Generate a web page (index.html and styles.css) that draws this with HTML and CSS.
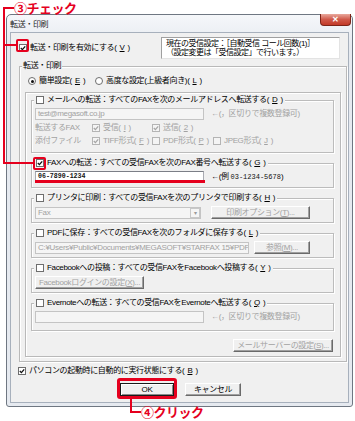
FILE: index.html
```html
<!DOCTYPE html>
<html lang="ja">
<head>
    <meta charset="utf-8" />
    <title>転送・印刷</title>
    <link rel="stylesheet" href="styles.css">
</head>
<body>
<div class="page">
    <div class="window">
        <div class="titlebar">
            <span class="title">転送・印刷</span>
            <span class="close">✕</span>
        </div>
        <div class="client">
            <div class="top-row">
                <label class="chk"><span class="cb on"><svg viewBox="0 0 6 6"><path d="M0.8 3 2.4 4.6 5.2 1.3"/></svg></span>転送・印刷を有効にする(<u>V</u>)</label>
                <div class="status">現在の受信設定：［自動受信 コール回数(1)］<br>（設定変更は「受信設定」で行います。）</div>
            </div>

            <div class="outer-group">
                <div class="outer-title">転送・印刷</div>
                <div class="radios">
                    <label class="rad"><span class="rb on"></span>簡単設定(<u>E</u>)</label>
                    <label class="rad"><span class="rb"></span>高度な設定(上級者向き)(<u>L</u>)</label>
                </div>

                <div class="panel">
                    <div class="group mail">
                        <div class="group-title"><span class="cb"></span>メールへの転送：すべてのFAXを次のメールアドレスへ転送する(<u>D</u>)</div>
                        <div class="group-body">
                            <div class="line">
                                <span class="input off w-short">test@megasoft.co.jp</span>
                                <span class="hint off">←(，区切りで複数登録可)</span>
                            </div>
                            <div class="opts off">
                                <span>転送するFAX</span>
                                <span class="chk"><span class="cb dis on"><svg viewBox="0 0 6 6"><path d="M0.8 3 2.4 4.6 5.2 1.3"/></svg></span>受信(<u>I</u>)</span>
                                <span class="chk"><span class="cb dis on"><svg viewBox="0 0 6 6"><path d="M0.8 3 2.4 4.6 5.2 1.3"/></svg></span>送信(<u>2</u>)</span>
                                <span></span>
                            </div>
                            <div class="opts off">
                                <span>添付ファイル</span>
                                <span class="chk"><span class="cb dis on"><svg viewBox="0 0 6 6"><path d="M0.8 3 2.4 4.6 5.2 1.3"/></svg></span>TIFF形式(<u>F</u>)</span>
                                <span class="chk"><span class="cb dis"></span>PDF形式(<u>P</u>)</span>
                                <span class="chk"><span class="cb dis"></span>JPEG形式(<u>J</u>)</span>
                            </div>
                        </div>
                    </div>

                    <div class="group">
                        <div class="group-title"><span class="cb on"><svg viewBox="0 0 6 6"><path d="M0.8 3 2.4 4.6 5.2 1.3"/></svg></span>FAXへの転送：すべての受信FAXを次のFAX番号へ転送する(<u>G</u>)</div>
                        <div class="group-body line">
                            <span class="input w-short mono">06-7890-1234</span>
                            <span class="hint">←(例 <span class="mono">03-1234-5678</span>)</span>
                        </div>
                    </div>

                    <div class="group">
                        <div class="group-title"><span class="cb"></span>プリンタに印刷：すべての受信FAXを次のプリンタで印刷する(<u>H</u>)</div>
                        <div class="group-body line">
                            <span class="input off select">Fax<span class="drop">▾</span></span>
                            <span class="btn dis w-print">印刷オプション(<u>T</u>)...</span>
                        </div>
                    </div>

                    <div class="group">
                        <div class="group-title"><span class="cb"></span>PDFに保存：すべての受信FAXを次のフォルダに保存する(<u>L</u>)</div>
                        <div class="group-body line">
                            <span class="input off w-path">C:¥Users¥Public¥Documents¥MEGASOFT¥STARFAX 15¥PDF保</span>
                            <span class="btn dis w-ref">参照(<u>M</u>)...</span>
                        </div>
                    </div>

                    <div class="group">
                        <div class="group-title"><span class="cb"></span>Facebookへの投稿：すべての受信FAXをFacebookへ投稿する(<u>Y</u>)</div>
                        <div class="group-body line">
                            <span class="btn dis w-fb">Facebookログインの設定(<u>X</u>)...</span>
                        </div>
                    </div>

                    <div class="group evernote">
                        <div class="group-title"><span class="cb"></span>Evernoteへの転送：すべての受信FAXをEvernoteへ転送する(<u>Q</u>)</div>
                        <div class="group-body line">
                            <span class="input off w-short"></span>
                            <span class="hint off">←(，区切りで複数登録可)</span>
                        </div>
                    </div>

                    <div class="panel-foot">
                        <span class="btn dis w-server">メールサーバーの設定(<u>S</u>)...</span>
                    </div>
                </div>
            </div>

            <label class="chk startup"><span class="cb on"><svg viewBox="0 0 6 6"><path d="M0.8 3 2.4 4.6 5.2 1.3"/></svg></span>パソコンの起動時に自動的に実行状態にする(<u>B</u>)</label>

            <div class="buttons">
                <span class="btn default">OK</span>
                <span class="btn cancel">キャンセル</span>
            </div>
        </div>
    </div>

    <!-- red annotations laid over the screenshot -->
    <div class="note note-check">③チェック</div>
    <div class="red-line" style="left:3px;top:7px;width:11px;height:2px"></div>
    <div class="red-line" style="left:3px;top:7px;width:2px;height:157px"></div>
    <div class="red-line" style="left:3px;top:44px;width:14px;height:2px"></div>
    <div class="red-line" style="left:3px;top:162px;width:31px;height:2px"></div>
    <div class="red-box" style="left:16px;top:39px;width:13px;height:13px"></div>
    <div class="red-box" style="left:33px;top:157px;width:13px;height:13px"></div>
    <div class="red-line" style="left:35px;top:180px;width:170px;height:3px"></div>
    <div class="red-box ok-box"></div>
    <div class="red-line" style="left:130px;top:398px;width:2px;height:15px"></div>
    <div class="red-line" style="left:130px;top:411px;width:11px;height:2px"></div>
    <div class="note note-click">④クリック</div>
</div>
</body>
</html>
```

FILE: styles.css
```css
* {
    box-sizing: border-box;
}

body {
    margin: 0;
    background: #fff;
    font-family: "Liberation Sans", "Noto Sans CJK JP", sans-serif;
    font-size: 8px;
    line-height: 10px;
    letter-spacing: -0.35px;
    color: #000;
}

u {
    text-decoration: underline;
    text-underline-offset: 1px;
}

.page {
    position: relative;
    width: 355px;
    height: 421px;
    overflow: hidden;
    padding: 14px 0 0 6px;
}

/* window frame */
.window {
    width: 347px;
    height: 393px;
    border: 1px solid #6f7782;
    border-radius: 5px 5px 3px 3px;
    background: linear-gradient(#f5f7fa, #e6eaf0 30px, #e6eaf0);
    padding: 0 3px 3px;
    display: flex;
    flex-direction: column;
}

.titlebar {
    height: 17px;
    display: flex;
    align-items: center;
}

.title {
    font-size: 8px;
    color: #1e1e1e;
    padding-top: 2px;
}

.close {
    margin-left: auto;
    margin-right: -2px;
    align-self: flex-start;
    margin-top: -1px;
    width: 31px;
    height: 12px;
    border: 1px solid #7d2418;
    border-top: none;
    border-radius: 0 0 4px 4px;
    background: linear-gradient(#e9a99d, #d0594a 50%, #c23a28);
    color: #fff;
    font-size: 8px;
    font-weight: 700;
    line-height: 11px;
    text-align: center;
    letter-spacing: 0;
}

.client {
    flex: 1;
    border: 1px solid #a7b0bc;
    background: #f0f0f0;
}

/* top row */
.top-row {
    margin-top: 4px;
    height: 22px;
    padding-left: 8px;
    display: flex;
    align-items: center;
}

.chk {
    display: flex;
    align-items: center;
    gap: 3px;
    white-space: nowrap;
}

.status {
    margin-left: auto;
    margin-right: 8px;
    width: 179px;
    height: 22px;
    border: 1px solid #a0a0a0;
    border-right-color: #e3e3e3;
    border-bottom-color: #e3e3e3;
    background: #fff;
    padding: 1px 0 0 4px;
    line-height: 9px;
    letter-spacing: -0.5px;
    white-space: nowrap;
}

/* checkbox and radio */
.cb {
    flex: none;
    width: 8px;
    height: 8px;
    border: 1px solid #6e6e6e;
    background: #fff;
    display: inline-flex;
}

.cb svg {
    width: 6px;
    height: 6px;
    fill: none;
    stroke: #111;
    stroke-width: 1.3;
}

.cb.dis {
    border-color: #b4b4b4;
    background: #f4f4f4;
}

.cb.dis svg {
    stroke: #a6a6a6;
}

.rb {
    flex: none;
    width: 8px;
    height: 8px;
    border: 1px solid #6e6e6e;
    border-radius: 50%;
    background: #fff;
    display: inline-flex;
    align-items: center;
    justify-content: center;
}

.rb.on::after {
    content: "";
    width: 3px;
    height: 3px;
    border-radius: 50%;
    background: #111;
}

/* outer group */
.outer-group {
    margin: 7px 1px 0 8px;
    height: 296px;
    border: 1px solid #b9b9b9;
    box-shadow: inset 1px 1px #fff, 1px 1px #fff;
}

.outer-title {
    margin: -6px 0 0 2px;
    padding: 0 1px;
    height: 10px;
    width: max-content;
    background: #f0f0f0;
}

.radios {
    margin-top: 5px;
    height: 10px;
    padding-left: 8px;
    display: flex;
    align-items: center;
}

.rad {
    display: flex;
    align-items: center;
    gap: 3px;
    width: 67px;
    white-space: nowrap;
}

.panel {
    margin: 6px 0 0 5px;
    width: 316px;
    height: 265px;
    border: 1px solid #b9b9b9;
    box-shadow: inset 1px 1px #fff, 1px 1px #fff;
    padding-top: 7px;
}

/* sub groups */
.group {
    margin: 0 0 10px 5px;
    width: 303px;
    height: 25px;
    border: 1px solid #bcbcbc;
    box-shadow: inset 1px 1px #fff, 1px 1px #fff;
}

.group.mail {
    height: 53px;
}

.group.evernote {
    height: 28px;
    margin-bottom: 0;
}

.group-title {
    margin: -6px 0 0 2px;
    padding: 0 2px;
    height: 10px;
    width: max-content;
    background: #f0f0f0;
    display: flex;
    align-items: center;
    gap: 3px;
    white-space: nowrap;
}

.group-body {
    margin-top: 3px;
    padding-left: 3px;
}

.line {
    display: flex;
    align-items: center;
    gap: 7px;
}

.input {
    height: 12px;
    border: 1px solid #a9abb2;
    border-top-color: #7b7e86;
    background: #fff;
    padding: 0 2px;
    line-height: 10px;
    white-space: nowrap;
    overflow: hidden;
    display: flex;
    align-items: center;
}

.input.off {
    border-color: #c4c4c4;
    background: #f5f5f5;
    color: #a2a2a2;
}

.w-short {
    width: 169px;
}

.w-path {
    width: 214px;
    letter-spacing: -0.3px;
}

.select {
    width: 166px;
    padding-right: 0;
}

.drop {
    margin-left: auto;
    width: 10px;
    height: 10px;
    border: 1px solid #c8c8c8;
    font-size: 6px;
    line-height: 8px;
    text-align: center;
    color: #9a9a9a;
}

.mono {
    font-family: "Liberation Mono", "DejaVu Sans Mono", monospace;
    font-size: 6.6px;
    font-weight: 700;
    letter-spacing: 0;
    color: #111;
}

.hint .mono {
    font-size: 7px;
    font-weight: 400;
}

.hint {
    white-space: nowrap;
}

.off,
.hint.off {
    color: #a2a2a2;
}

.opts {
    margin-top: 3px;
    height: 10px;
    display: grid;
    grid-template-columns: 57px 60px 61px auto;
    align-items: center;
}

/* buttons */
.btn {
    height: 13px;
    border: 1px solid;
    border-color: #fff #6a6a6a #6a6a6a #fff;
    box-shadow: inset -1px -1px #a0a0a0;
    background: #f0f0f0;
    display: inline-flex;
    align-items: center;
    justify-content: center;
    white-space: nowrap;
}

.btn.dis {
    color: #a2a2a2;
}

.w-print {
    margin-left: 3px;
    width: 99px;
}

.w-ref {
    margin-left: -2px;
    width: 56px;
}

.w-fb {
    width: 109px;
}

.w-server {
    width: 100px;
}

.panel-foot {
    margin-top: 8px;
    padding-right: 7px;
    display: flex;
    justify-content: flex-end;
}

.startup {
    margin-top: 4px;
    height: 10px;
    padding-left: 7px;
}

.buttons {
    margin-top: 7px;
    padding-left: 109px;
    display: flex;
    gap: 11px;
}

.btn.default {
    width: 54px;
    border-color: #1a1a1a;
    box-shadow: inset 1px 1px #fff, inset -1px -1px #8a8a8a;
}

.btn.cancel {
    width: 56px;
}

/* annotations */
.note {
    position: absolute;
    color: #e5001e;
    font-family: "Noto Sans CJK JP", sans-serif;
    font-size: 13px;
    line-height: 15px;
    font-weight: 700;
    letter-spacing: -0.5px;
    white-space: nowrap;
}

.note-check {
    left: 14px;
    top: 0;
}

.note-click {
    left: 141px;
    top: 404px;
}

.red-line {
    position: absolute;
    background: #e5001e;
}

.red-box {
    position: absolute;
    border: 2px solid #e5001e;
    border-radius: 2px;
}

.ok-box {
    left: 117px;
    top: 378px;
    width: 60px;
    height: 21px;
    border-width: 3px;
    border-radius: 3px;
}
```
